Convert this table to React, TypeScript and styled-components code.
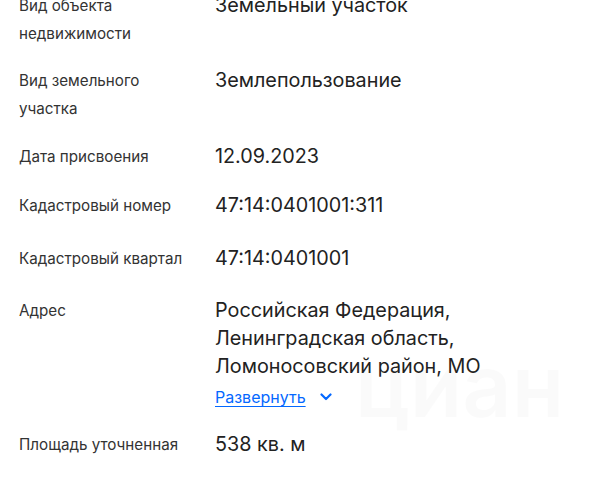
import React from 'react';
import styled, { createGlobalStyle } from 'styled-components';

const GlobalStyle = createGlobalStyle`
  html, body {
    margin: 0;
    padding: 0;
    background: #fff;
    overflow: hidden;
  }
  body {
    font-family: Inter, 'Liberation Sans', Arial, sans-serif;
  }
`;

interface Item {
  label: string;
  value: string[];
  gap: number;
  expandable?: boolean;
}

const items: Item[] = [
  { label: 'Вид объекта недвижимости', value: ['Земельный участок'], gap: 0 },
  { label: 'Вид земельного участка', value: ['Землепользование'], gap: 19 },
  { label: 'Дата присвоения', value: ['12.09.2023'], gap: 20 },
  { label: 'Кадастровый номер', value: ['47:14:0401001:311'], gap: 21 },
  { label: 'Кадастровый квартал', value: ['47:14:0401001'], gap: 25 },
  {
    label: 'Адрес',
    value: ['Российская Федерация,', 'Ленинградская область,', 'Ломоносовский район, МО'],
    gap: 24,
    expandable: true,
  },
  { label: 'Площадь уточненная', value: ['538 кв. м'], gap: 20 },
];

const Page = styled.div`
  position: relative;
  width: 607px;
  height: 480px;
  overflow: hidden;
`;

const List = styled.dl`
  position: relative;
  z-index: 1;
  margin: 0;
  padding: 0 0 0 19px;
  margin-top: -8px;
  display: flex;
  flex-direction: column;
`;

const Row = styled.div<{ $gap: number }>`
  display: flex;
  align-items: flex-start;
  margin-top: ${(p) => p.$gap}px;
`;

const Label = styled.dt`
  width: 196px;
  flex-shrink: 0;
  padding-right: 20px;
  box-sizing: border-box;
  font-size: 15.2px;
  line-height: 28px;
  color: #333333;
`;

const Value = styled.dd`
  margin: 0;
  font-size: 19.8px;
  line-height: 28px;
  color: #222222;
  margin-top: -1px;
`;

const Expand = styled.button`
  display: flex;
  align-items: center;
  gap: 14px;
  margin-top: 3px;
  padding: 0;
  border: 0;
  background: none;
  cursor: pointer;
  font-family: inherit;
  font-size: 16px;
  line-height: 28px;
  letter-spacing: 0;
  color: #0468ff;
  text-decoration: underline;
  text-decoration-thickness: 1px;
  text-underline-offset: 3px;
`;

/* faint brand watermark behind the list */
const Watermark = styled.div`
  position: absolute;
  left: 355px;
  top: 361px;
  font-size: 86px;
  line-height: 50px;
  font-weight: 600;
  color: rgba(0, 0, 0, 0.018);
  pointer-events: none;
`;

const Chevron = () => (
  <svg width="12" height="8" viewBox="0 0 12 8" fill="none">
    <path d="M1.5 1.5L6 6l4.5-4.5" stroke="#0468ff" strokeWidth="2.2" strokeLinecap="round" strokeLinejoin="round" />
  </svg>
);

export default function App() {
  return (
    <Page>
      <GlobalStyle />
      <Watermark>циан</Watermark>
      <List>
        {items.map((item) => (
          <Row key={item.label} $gap={item.gap}>
            <Label>{item.label}</Label>
            <Value>
              {item.value.map((line) => (
                <div key={line}>{line}</div>
              ))}
              {item.expandable && (
                <Expand>
                  Развернуть
                  <Chevron />
                </Expand>
              )}
            </Value>
          </Row>
        ))}
      </List>
    </Page>
  );
}
